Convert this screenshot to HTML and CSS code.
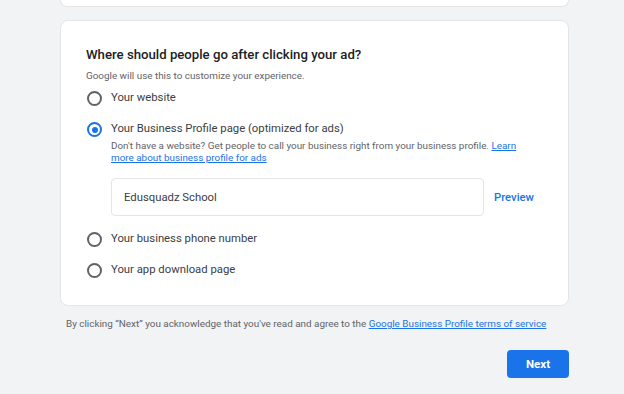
FILE: index.html
```html
<!DOCTYPE html>
<html>
<head>
<meta charset="utf-8">
<link rel="stylesheet" href="styles.css">
</head>
<body>
<div class="page">
  <div class="card-top"></div>
  <div class="card">
    <h2 class="title">Where should people go after clicking your ad?</h2>
    <p class="sub">Google will use this to customize your experience.</p>
    <div class="options">
      <div class="opt"><span class="radio"></span><span class="label">Your website</span></div>
      <div class="opt sel">
        <span class="radio on"></span>
        <div class="optbody">
          <span class="label">Your Business Profile page (optimized for ads)</span>
          <p class="desc">Don't have a website? Get people to call your business right from your business profile. <a href="#">Learn more about business profile for ads</a></p>
          <div class="inrow">
            <div class="field">Edusquadz School</div>
            <a class="preview" href="#">Preview</a>
          </div>
        </div>
      </div>
      <div class="opt"><span class="radio"></span><span class="label">Your business phone number</span></div>
      <div class="opt"><span class="radio"></span><span class="label">Your app download page</span></div>
    </div>
  </div>
  <p class="terms">By clicking “Next” you acknowledge that you've read and agree to the <a href="#">Google Business Profile terms of service</a></p>
  <div class="actions"><button class="next">Next</button></div>
</div>
</body>
</html>
```
FILE: styles.css
```css
html, body { margin: 0; padding: 0; background: #f1f3f4; }
body { font-family: Roboto, "Noto Sans", Arial, sans-serif; color: #3c4043; }
.page { width: 509px; margin-left: 60px; }
.card-top { height: 6px; background: #fff; border: 1px solid #e3e5e8; border-top: none; border-radius: 0 0 8px 8px; }
.card { margin-top: 13px; background: #fff; border: 1px solid #e3e5e8; border-radius: 8px; padding: 24px 24px 21px 25px; }
.title { margin: 0; font-size: 13.2px; font-weight: 500; color: #202124; line-height: 20px; }
.sub { margin: 4px 0 0; font-size: 9.9px; color: #5f6368; line-height: 14px; }
.options { margin-top: 1px; display: flex; flex-direction: column; }
.opt { display: flex; align-items: flex-start; gap: 9px; padding: 6px 0; }
.opt + .opt { margin-top: 3px; }
.radio { box-sizing: border-box; width: 15px; height: 15px; border: 2px solid #5f6368; border-radius: 50%; flex: none; margin-top: 1px; margin-left: 1px; position: relative; }
.radio.on { border-color: #1a73e8; }
.radio.on::after { content: ""; position: absolute; left: 2.5px; top: 2.5px; width: 6px; height: 6px; border-radius: 50%; background: #1a73e8; }
.label { font-size: 11.3px; line-height: 16px; color: #3c4043; }
.optbody { flex: 1; display: flex; flex-direction: column; }
.desc { margin: 3px 0 0; padding-right: 14px; font-size: 9.9px; line-height: 12px; color: #5f6368; }
.desc a, .terms a { color: #1a73e8; text-decoration: underline; }
.inrow { display: flex; align-items: center; margin-top: 14px; gap: 10px; }
.field { box-sizing: border-box; width: 373px; height: 38px; border: 1px solid #e3e5e8; border-radius: 4px; display: flex; align-items: center; padding-left: 12px; font-size: 11.3px; color: #3c4043; }
.preview { font-size: 11.3px; font-weight: 500; color: #1a73e8; text-decoration: none; }
.terms { margin: 11px 0 0 6px; font-size: 9.9px; color: #5f6368; line-height: 14px; white-space: nowrap; }
.actions { display: flex; justify-content: flex-end; margin-top: 19px; }
.next { width: 62px; height: 28px; border: none; border-radius: 4px; background: #1a73e8; color: #fff; font-family: Roboto, Arial, sans-serif; font-size: 11.5px; font-weight: 700; }
```
